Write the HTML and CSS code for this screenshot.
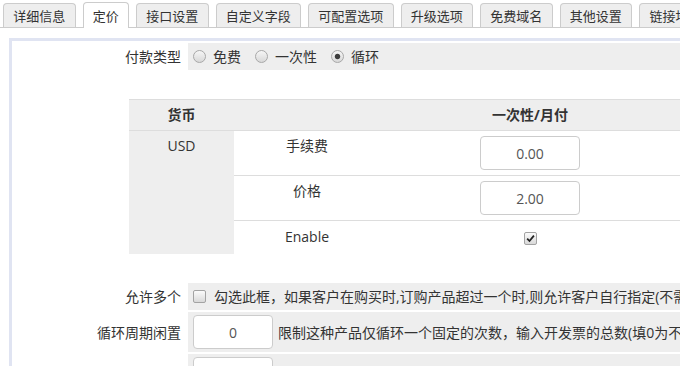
FILE: index.html
```html
<!DOCTYPE html>
<html lang="zh-CN">
<head>
<meta charset="utf-8">
<title>定价</title>
<link rel="stylesheet" href="styles.css">
</head>
<body>
<div class="page">
  <div class="tabs">
    <a class="tab">详细信息</a>
    <a class="tab active">定价</a>
    <a class="tab">接口设置</a>
    <a class="tab">自定义字段</a>
    <a class="tab">可配置选项</a>
    <a class="tab">升级选项</a>
    <a class="tab">免费域名</a>
    <a class="tab">其他设置</a>
    <a class="tab">链接地址</a>
  </div>

  <div class="box">
    <div class="row">
      <div class="label">付款类型</div>
      <div class="field">
        <label class="opt"><span class="radio"></span>免费</label>
        <label class="opt"><span class="radio"></span>一次性</label>
        <label class="opt"><span class="radio checked"></span>循环</label>
      </div>
    </div>

    <div class="pricing">
      <table class="price">
        <tr class="head">
          <td class="c1">货币</td>
          <td class="c2"></td>
          <td class="c3">一次性/月付</td>
        </tr>
        <tr>
          <td class="cur" rowspan="3">USD</td>
          <td>手续费</td>
          <td><input class="pin" type="text" value="0.00"></td>
        </tr>
        <tr>
          <td>价格</td>
          <td><input class="pin" type="text" value="2.00"></td>
        </tr>
        <tr class="en">
          <td>Enable</td>
          <td><span class="cb on"><svg viewBox="0 0 10 10" width="9" height="9"><path d="M1.3 5.2 L3.9 7.8 L8.8 1.8" fill="none" stroke="#222" stroke-width="2"/></svg></span></td>
        </tr>
      </table>
    </div>

    <div class="row">
      <div class="label">允许多个</div>
      <div class="field">
        <span class="cb"></span>勾选此框，如果客户在购买时,订购产品超过一个时,则允许客户自行指定(不需要再添加到购物车)数量
      </div>
    </div>

    <div class="row">
      <div class="label">循环周期闲置</div>
      <div class="field tall">
        <input class="sin" type="text" value="0">
        <span>限制这种产品仅循环一个固定的次数，输入开发票的总数(填0为不限制)</span>
      </div>
    </div>

    <div class="row">
      <div class="label">自动终止/固定期限</div>
      <div class="field tall">
        <input class="sin" type="text" value="0">
        <span>输入天数，在产品开通后的指定天数自动终止服务(填0为禁用)</span>
      </div>
    </div>
  </div>
</div>
</body>
</html>
```

FILE: styles.css
```css
html, body {
  margin: 0;
  padding: 0;
  background: #fff;
  overflow: hidden;
}

body {
  font-family: "Open Sans", "Noto Sans CJK SC", sans-serif;
  font-size: 14px;
  color: #333;
}

.page {
  width: 1000px;
}

/* tabs */
.tabs {
  display: flex;
  align-items: flex-start;
  gap: 7px;
  height: 24px;
  padding: 3px 0 0 3px;
  border-bottom: 1px solid #ccc;
  white-space: nowrap;
}

.tab {
  flex: none;
  box-sizing: border-box;
  height: 24px;
  padding: 0 9.25px;
  border: 1px solid #ccc;
  border-bottom: 0;
  border-radius: 4px 4px 0 0;
  background: #eee;
  font-family: "Noto Sans CJK SC", sans-serif;
  font-size: 13px;
  line-height: 23px;
  color: #333;
}

.tab.active {
  position: relative;
  height: 26px;
  margin-top: -1px;
  line-height: 25px;
  background: #fff;
}

/* content box */
.box {
  margin: 10px 0 0 9px;
  border: 3px solid #e0e4f2;
  padding: 2px;
  display: flex;
  flex-direction: column;
  gap: 2px;
}

.row {
  display: grid;
  grid-template-columns: 172px 1fr;
  column-gap: 2px;
}

.label {
  display: flex;
  align-items: center;
  justify-content: flex-end;
  padding-right: 5px;
  white-space: nowrap;
  line-height: 21px;
}

.field {
  display: flex;
  align-items: center;
  background: #eee;
  padding: 3px 5px;
  min-height: 21px;
  line-height: 21px;
  white-space: nowrap;
}

.field.tall {
  gap: 5px;
}

.opt {
  display: flex;
  align-items: center;
  margin-right: 14px;
}

.radio {
  flex: none;
  box-sizing: border-box;
  width: 13px;
  height: 13px;
  margin-right: 7px;
  border: 1px solid #a8a8a8;
  border-radius: 50%;
  background: linear-gradient(#f6f6f6, #d8d8d8);
}

.radio.checked {
  background: radial-gradient(circle, #3c3c3c 0, #3c3c3c 2.2px, rgba(60,60,60,0) 3.2px), linear-gradient(#f6f6f6, #d8d8d8);
}

.cb {
  flex: none;
  display: inline-flex;
  align-items: center;
  justify-content: center;
  box-sizing: border-box;
  width: 13px;
  height: 13px;
  margin-right: 8px;
  border: 1px solid #a3a3a3;
  border-radius: 2px;
  background: linear-gradient(#fbfbfb, #d9d9d9);
  vertical-align: middle;
}

.cb.on {
  margin-right: 0;
}

/* pricing table */
.pricing {
  padding: 27px 0 27px 115px;
}

.price {
  border-collapse: collapse;
  text-align: center;
}

.price td {
  padding: 5px;
  border-top: 1px solid #ddd;
  line-height: 20px;
  vertical-align: top;
}

.price .head td {
  background: #eee;
  font-weight: bold;
  font-family: "Open Sans", "Noto Sans CJK SC", sans-serif;
}

.price .c1 { width: 95px; }
.price .c2 { width: 136px; }
.price .c3 { width: 290px; }

.price .cur {
  background: #eee;
}

.price .en td {
  padding-bottom: 7px;
  line-height: 21px;
}

.pin, .sin {
  display: block;
  box-sizing: border-box;
  height: 34px;
  border: 1px solid #ccc;
  border-radius: 4px;
  background: #fff;
  font-family: "Open Sans", sans-serif;
  font-size: 14px;
  color: #555;
  text-align: center;
  padding: 0 6px;
  margin: 0;
}

.pin {
  width: 100px;
  margin: 0 auto;
}

.sin {
  flex: none;
  width: 80px;
}
```
